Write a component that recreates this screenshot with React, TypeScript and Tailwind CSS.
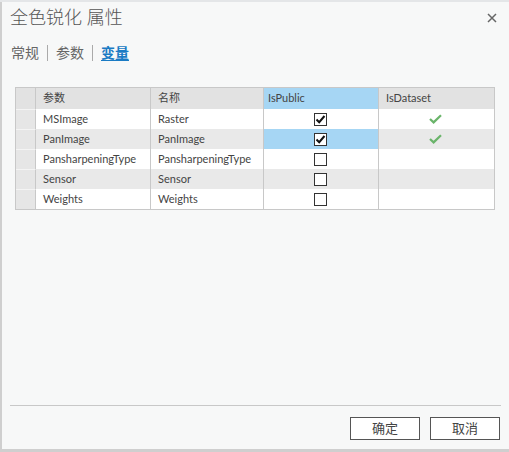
import { useState } from "react"

type Row = { param: string; name: string; isPublic: boolean; isDataset: boolean }

const rows: Row[] = [
  { param: "MSImage", name: "Raster", isPublic: true, isDataset: true },
  { param: "PanImage", name: "PanImage", isPublic: true, isDataset: true },
  { param: "PansharpeningType", name: "PansharpeningType", isPublic: false, isDataset: false },
  { param: "Sensor", name: "Sensor", isPublic: false, isDataset: false },
  { param: "Weights", name: "Weights", isPublic: false, isDataset: false },
]

const font = { fontFamily: '"Noto Sans", "Noto Sans CJK SC", sans-serif' }
const cellFont = { fontFamily: 'Lato, "Noto Sans CJK SC", sans-serif' }

function CheckBox({ checked }: { checked: boolean }) {
  return (
    <span className="flex h-[13px] w-[13px] items-center justify-center border border-[#333] bg-white">
      {checked && (
        <svg width="11" height="11" viewBox="0 0 11 11">
          <path d="M1.5 5.5 L4.2 8.2 L9.5 2" fill="none" stroke="#111" strokeWidth="2" />
        </svg>
      )}
    </span>
  )
}

function GreenCheck() {
  return (
    <svg width="13" height="10" viewBox="0 0 13 10">
      <path d="M1 5 L4.6 8.4 L12 1.2" fill="none" stroke="#6ab46a" strokeWidth="2.2" />
    </svg>
  )
}

export default function App() {
  const [tab] = useState("变量")
  const grid = "grid grid-cols-[20px_115px_113px_115px_115px]"

  return (
    <div className="flex h-[452px] w-[509px] flex-col overflow-hidden bg-[#f7f8f8]" style={font}>
      {/* strip of the window behind */}
      <div className="h-[2px] bg-[#e4e6e8]" />
      <div className="flex flex-1 flex-col border-b-[3px] border-l-2 border-[#cfcfcf]">
        {/* title bar */}
        <div className="flex h-[31px] items-center justify-between pl-[8px] pr-[12px]">
          <span className="text-[18px] font-light text-[#555]">全色锐化 属性</span>
          <svg width="10" height="10" viewBox="0 0 10 10">
            <path d="M1 1 L9 9 M9 1 L1 9" stroke="#666" strokeWidth="1.5" />
          </svg>
        </div>

        {/* tabs */}
        <div className="mt-[11px] flex items-center pl-[9px] text-[14px] leading-[18px]">
          {["常规", "参数", "变量"].map((t, i) => (
            <div key={t} className="flex items-center">
              {i > 0 && <span className="mx-[8px] h-[16px] w-px bg-[#aaa]" />}
              <span
                className={
                  t === tab
                    ? "font-bold text-[#1a7bc4] underline decoration-1 underline-offset-2"
                    : "text-[#666]"
                }
              >
                {t}
              </span>
            </div>
          ))}
        </div>

        {/* variables table */}
        <div
          className="mt-[25px] ml-[13px] w-[480px] border border-[#c8c8c8] bg-[#f3f3f3] text-[11px] text-[#444]"
          style={cellFont}
        >
          <div className={`${grid} h-[21px] bg-[#e2e2e2]`}>
            <div className="border-r border-[#c8c8c8]" />
            <div className="flex items-center border-r border-[#c8c8c8] pl-[7px]">参数</div>
            <div className="flex items-center border-r border-[#c8c8c8] pl-[7px]">名称</div>
            <div className="flex items-center border-r border-[#c8c8c8] bg-[#a6d6f4] pl-[4px]">IsPublic</div>
            <div className="flex items-center pl-[7px]">IsDataset</div>
          </div>
          {rows.map((r, i) => {
            const bg = i % 2 === 0 ? "bg-white" : "bg-[#e9e9e9]"
            const sel = i === 1
            return (
              <div key={r.param} className={`${grid} h-[20px]`}>
                <div className="border-r border-t border-[#f4f4f4] border-r-[#c8c8c8] bg-[#e6e6e6]" />
                <div className={`flex items-center border-r border-[#c8c8c8] pl-[7px] ${bg}`}>{r.param}</div>
                <div className={`flex items-center border-r border-[#c8c8c8] pl-[7px] ${bg}`}>{r.name}</div>
                <div
                  className={`flex items-center justify-center border-r border-[#c8c8c8] pr-[1px] ${
                    sel ? "bg-[#a6d6f4]" : bg
                  }`}
                >
                  <CheckBox checked={r.isPublic} />
                </div>
                <div className={`flex items-center justify-center pr-[2px] ${bg}`}>
                  {r.isDataset && <GreenCheck />}
                </div>
              </div>
            )
          })}
        </div>

        <div className="flex-1" />

        {/* footer */}
        <div className="mx-[8px] h-px bg-[#c8c8c8]" />
        <div className="flex justify-end gap-[10px] pr-[9px] pt-[11px] pb-[9px] text-[13px] text-[#444]">
          <button className="h-[23px] w-[70px] border border-[#555] bg-white">确定</button>
          <button className="h-[23px] w-[70px] border border-[#555] bg-white">取消</button>
        </div>
      </div>
    </div>
  )
}
